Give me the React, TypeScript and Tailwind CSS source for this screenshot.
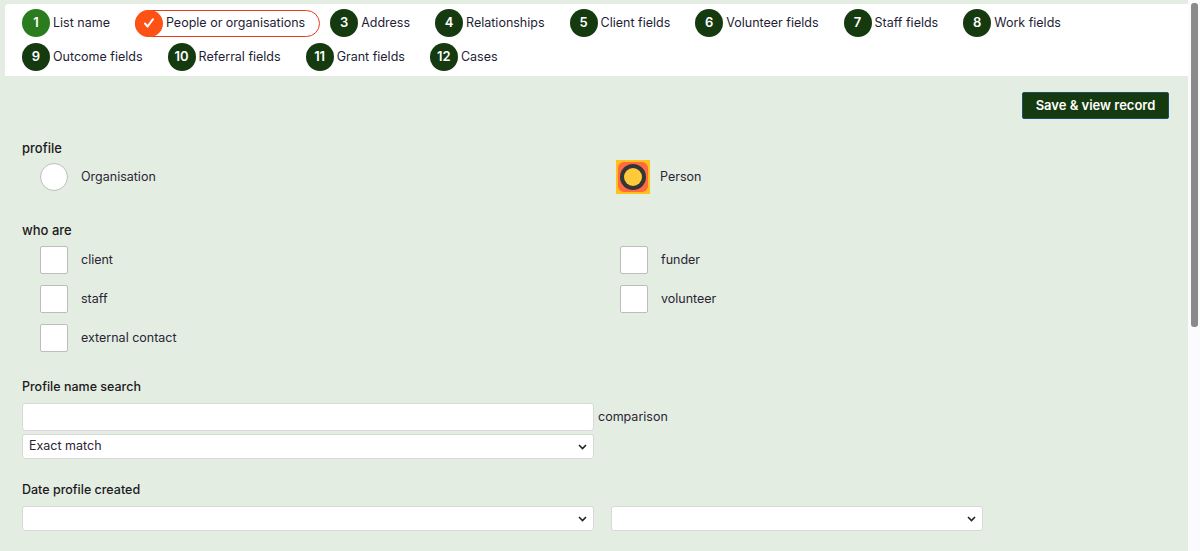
import React from "react";

const steps = [
  { n: "1", label: "List name", kind: "done" },
  { n: "2", label: "People or organisations", kind: "active" },
  { n: "3", label: "Address", kind: "todo" },
  { n: "4", label: "Relationships", kind: "todo" },
  { n: "5", label: "Client fields", kind: "todo" },
  { n: "6", label: "Volunteer fields", kind: "todo" },
  { n: "7", label: "Staff fields", kind: "todo" },
  { n: "8", label: "Work fields", kind: "todo" },
  { n: "9", label: "Outcome fields", kind: "todo" },
  { n: "10", label: "Referral fields", kind: "todo" },
  { n: "11", label: "Grant fields", kind: "todo" },
  { n: "12", label: "Cases", kind: "todo" },
];

function Step({ n, label, kind }: { n: string; label: string; kind: string }) {
  if (kind === "active") {
    return (
      <div className="flex items-center h-[28px] -mr-[15px]">
        <div className="flex items-center h-[27px] pr-[14px] rounded-full border border-[#ea3a1e] bg-white">
          <div className="w-[28px] h-[27px] -ml-px rounded-full bg-[#fe5116] flex items-center justify-center">
            <svg width="12" height="12" viewBox="0 0 12 12">
              <path d="M2 6.5l2.6 3L10 2.2" fill="none" stroke="#fff" strokeWidth="2" strokeLinecap="round" strokeLinejoin="round" />
            </svg>
          </div>
          <span className="ml-[3px] text-[12.5px] text-[#241d36]">{label}</span>
        </div>
      </div>
    );
  }
  return (
    <div className="flex items-center h-[28px]">
      <div
        className={
          kind === "done"
            ? "w-[28px] h-[28px] rounded-full bg-[#2a7c1f] flex items-center justify-center text-white text-[13px] font-semibold"
            : "w-[28px] h-[28px] rounded-full bg-[#163a10] flex items-center justify-center text-white text-[13px] font-semibold"
        }
      >
        {n}
      </div>
      <span className="ml-[3px] text-[12.5px] text-[#241d36]">{label}</span>
    </div>
  );
}

function Checkbox({ label }: { label: string }) {
  return (
    <div className="flex items-center h-[28px] pl-[18px]">
      <div className="w-[28px] h-[28px] bg-white border border-[#bdbdbd] rounded-[2px]" />
      <span className="ml-[13px] text-[12.5px] text-[#2a2535]">{label}</span>
    </div>
  );
}

function Chevron() {
  return (
    <svg width="9" height="6" viewBox="0 0 9 6">
      <path d="M1 1l3.5 3.5L8 1" fill="none" stroke="#222" strokeWidth="1.6" />
    </svg>
  );
}

export default function App() {
  return (
    <div
      className="h-[551px] overflow-hidden bg-[#e3ede2] flex"
      style={{ fontFamily: "Inter, 'Noto Sans', sans-serif" }}
    >
      <div className="flex-1 min-w-0">
        <nav className="mt-[4px] ml-[5px] bg-white pl-[17px] pt-[5px] pb-[5px] flex flex-wrap gap-x-[25px] gap-y-[6px] rounded-tl-[4px]">
          {steps.map((s) => (
            <Step key={s.n} {...s} />
          ))}
        </nav>

        <div className="pl-[22px] pr-[19px] pt-[16px]">
          <div className="flex justify-end">
            <button className="h-[27px] w-[147px] bg-[#163a10] border border-[#1f4d6b] rounded-[2px] text-white text-[13px] font-semibold">
              Save &amp; view record
            </button>
          </div>

          <div className="mt-[21px] text-[13px] font-medium text-[#1c1a20] leading-[16px]">profile</div>
          <div className="mt-[4px] grid grid-cols-[580px_1fr] h-[34px] items-center">
            <div className="flex items-center pl-[18px]">
              <div className="w-[28px] h-[28px] rounded-full bg-white border border-[#bdbdbd]" />
              <span className="ml-[13px] text-[12.5px] text-[#2a2535]">Organisation</span>
            </div>
            <div className="flex items-center pl-[14px]">
              <div className="w-[34px] h-[34px] bg-[#ffc21a] p-[2px]">
                <div className="w-full h-full rounded-[6px] bg-[#ff6a40] flex items-center justify-center">
                  <div className="w-[26px] h-[26px] rounded-full bg-[#353535] flex items-center justify-center">
                    <div className="w-[18px] h-[18px] rounded-full bg-[#ffc93c]" />
                  </div>
                </div>
              </div>
              <span className="ml-[10px] text-[12.5px] text-[#2a2535]">Person</span>
            </div>
          </div>

          <div className="mt-[28px] text-[13px] font-medium text-[#1c1a20] leading-[16px]">who are</div>
          <div className="mt-[8px] grid grid-cols-[580px_1fr] gap-y-[11px]">
            <Checkbox label="client" />
            <Checkbox label="funder" />
            <Checkbox label="staff" />
            <Checkbox label="volunteer" />
            <Checkbox label="external contact" />
          </div>

          <div className="mt-[27px] text-[12.5px] font-medium text-[#1c1a20] leading-[16px]">Profile name search</div>
          <div className="mt-[8px] flex items-center">
            <div className="w-[572px] h-[28px] bg-white border border-[#d9d9d9] rounded-[3px]" />
            <span className="ml-[4px] text-[12.5px] text-[#2a2535]">comparison</span>
          </div>
          <div className="mt-[3px] w-[572px] h-[25px] bg-white border border-[#d9d9d9] rounded-[3px] flex items-center justify-between pl-[6px] pr-[6px]">
            <span className="text-[12.5px] text-[#2a2535]">Exact match</span>
            <Chevron />
          </div>

          <div className="mt-[23px] text-[12.5px] font-medium text-[#1c1a20] leading-[16px]">Date profile created</div>
          <div className="mt-[8px] flex gap-[17px]">
            <div className="w-[572px] h-[25px] bg-white border border-[#d9d9d9] rounded-[3px] flex items-center justify-end pr-[6px]">
              <Chevron />
            </div>
            <div className="w-[372px] h-[25px] bg-white border border-[#d9d9d9] rounded-[3px] flex items-center justify-end pr-[6px]">
              <Chevron />
            </div>
          </div>
        </div>
      </div>

      <div className="w-[12px] shrink-0 bg-[#fbfbfd] pt-[3px] flex justify-center">
        <div className="w-[7px] h-[324px] rounded-[3px] bg-[#8a8a8a]" />
      </div>
    </div>
  );
}
